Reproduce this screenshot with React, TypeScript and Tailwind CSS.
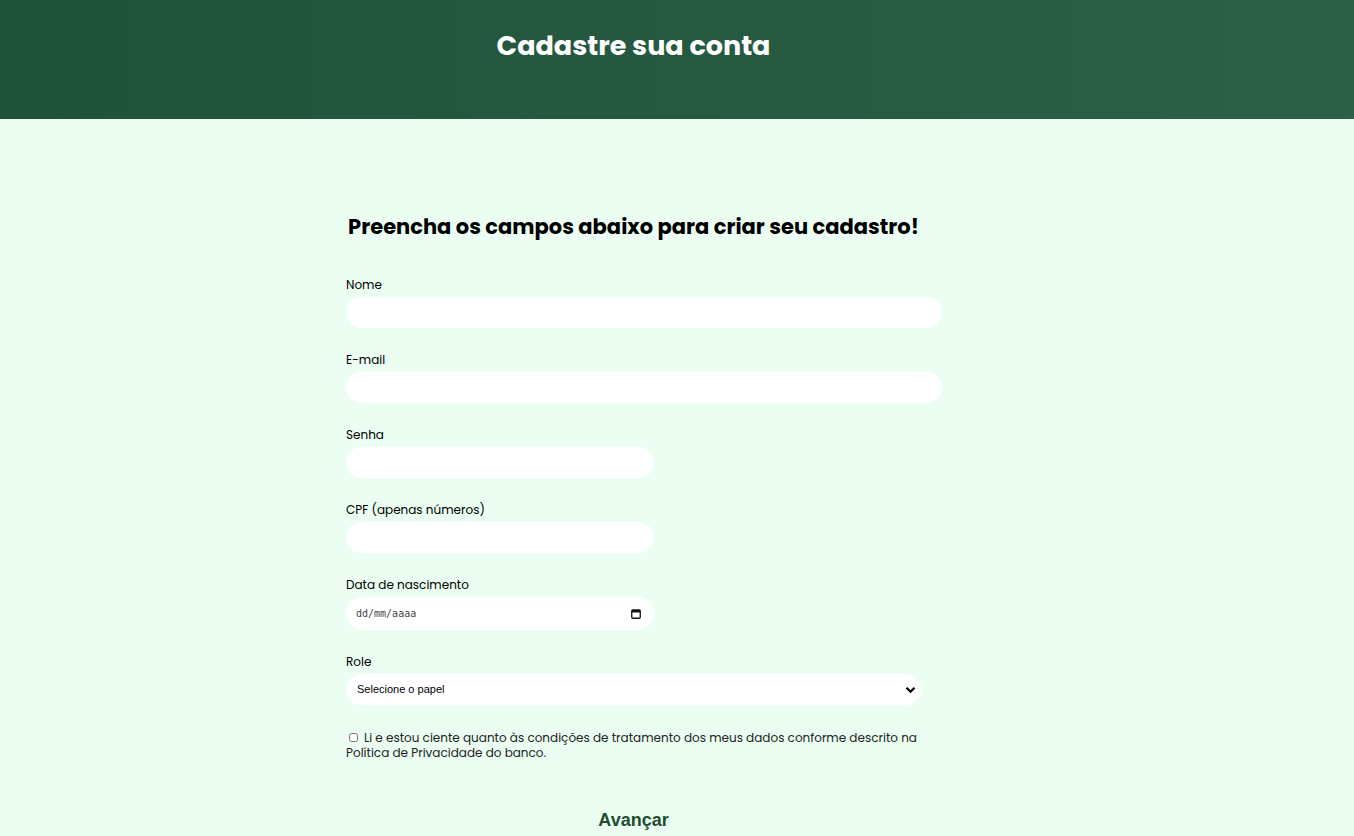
import React from "react";

const font = { fontFamily: '"Poppins", "Noto Sans", sans-serif' };

function Field({ label, wide = true, children }: { label: string; wide?: boolean; children?: React.ReactNode }) {
  return (
    <div className="flex flex-col mb-[21px]">
      <label className="text-[12px] leading-[20px] text-black pt-[1px]">{label}</label>
      {children ?? (
        <input
          type="text"
          className={`mt-[2px] h-[31px] rounded-full bg-white outline-none px-4 ${wide ? "w-[596px]" : "w-[308px]"}`}
        />
      )}
    </div>
  );
}

export default function App() {
  return (
    <div className="min-h-screen bg-[#ebfef1]" style={font}>
      <header className="h-[119px] bg-linear-to-r from-[#1d5339] to-[#2e5f48]">
        <div className="ml-[346px] w-[575px] pt-[26px] text-center">
          <h1 className="text-[27px] leading-[40px] font-bold text-white">Cadastre sua conta</h1>
        </div>
      </header>
      <main className="ml-[346px] w-[575px] pt-[94px] pb-10">
        <h2 className="text-[21px] leading-[28px] font-bold text-black text-center mb-[33px]">
          Preencha os campos abaixo para criar seu cadastro!
        </h2>
        <form className="flex flex-col">
          <Field label="Nome" />
          <Field label="E-mail" />
          <Field label="Senha" wide={false} />
          <Field label="CPF (apenas números)" wide={false} />
          <Field label="Data de nascimento">
            <div className="mt-[2px] h-[33px] w-[308px] rounded-full bg-white flex items-center justify-between pl-[10px] pr-[13px]">
              <span className="text-[10px] text-[#444]" style={{ fontFamily: '"DejaVu Sans Mono", monospace' }}>
                dd/mm/aaaa
              </span>
              <svg width="10" height="10" viewBox="0 0 10 10">
                <rect x="0.75" y="1" width="8.5" height="8.25" rx="1" fill="none" stroke="#111" strokeWidth="1.3" />
                <rect x="0.75" y="1" width="8.5" height="2.5" fill="#111" />
              </svg>
            </div>
          </Field>
          <div className="flex flex-col">
            <label className="text-[12px] leading-[20px] text-black pt-[1px]">Role</label>
            <div className="mt-[2px] h-[31px] w-[575px] rounded-full bg-white flex items-center pl-[11px] pr-[5px]">
              <select
                className="flex-1 appearance-none bg-transparent outline-none text-[11px] text-black"
                style={{ fontFamily: '"Liberation Sans", Arial, sans-serif' }}
                defaultValue=""
              >
                <option value="">Selecione o papel</option>
                <option value="cliente">Cliente</option>
                <option value="gerente">Gerente</option>
              </select>
              <svg width="11" height="8" viewBox="0 0 11 8">
                <path d="M1.5 1.8 L5.5 5.8 L9.5 1.8" fill="none" stroke="#000" strokeWidth="2.2" />
              </svg>
            </div>
          </div>
          <p className="mt-[25px] text-[12px] leading-[15px] text-[#222]">
            <input type="checkbox" className="w-[9px] h-[9px] ml-[3px] mr-[6px] align-[0px]" />
            Li e estou ciente quanto às condições de tratamento dos meus dados conforme descrito na Política de Privacidade do banco.
          </p>
          <div className="mt-[48px] flex justify-center">
            <button
              type="button"
              className="text-[18px] font-bold text-[#1f4d30] leading-[24px]"
              style={{ fontFamily: '"Liberation Sans", Arial, sans-serif' }}
            >
              Avançar
            </button>
          </div>
        </form>
      </main>
    </div>
  );
}
